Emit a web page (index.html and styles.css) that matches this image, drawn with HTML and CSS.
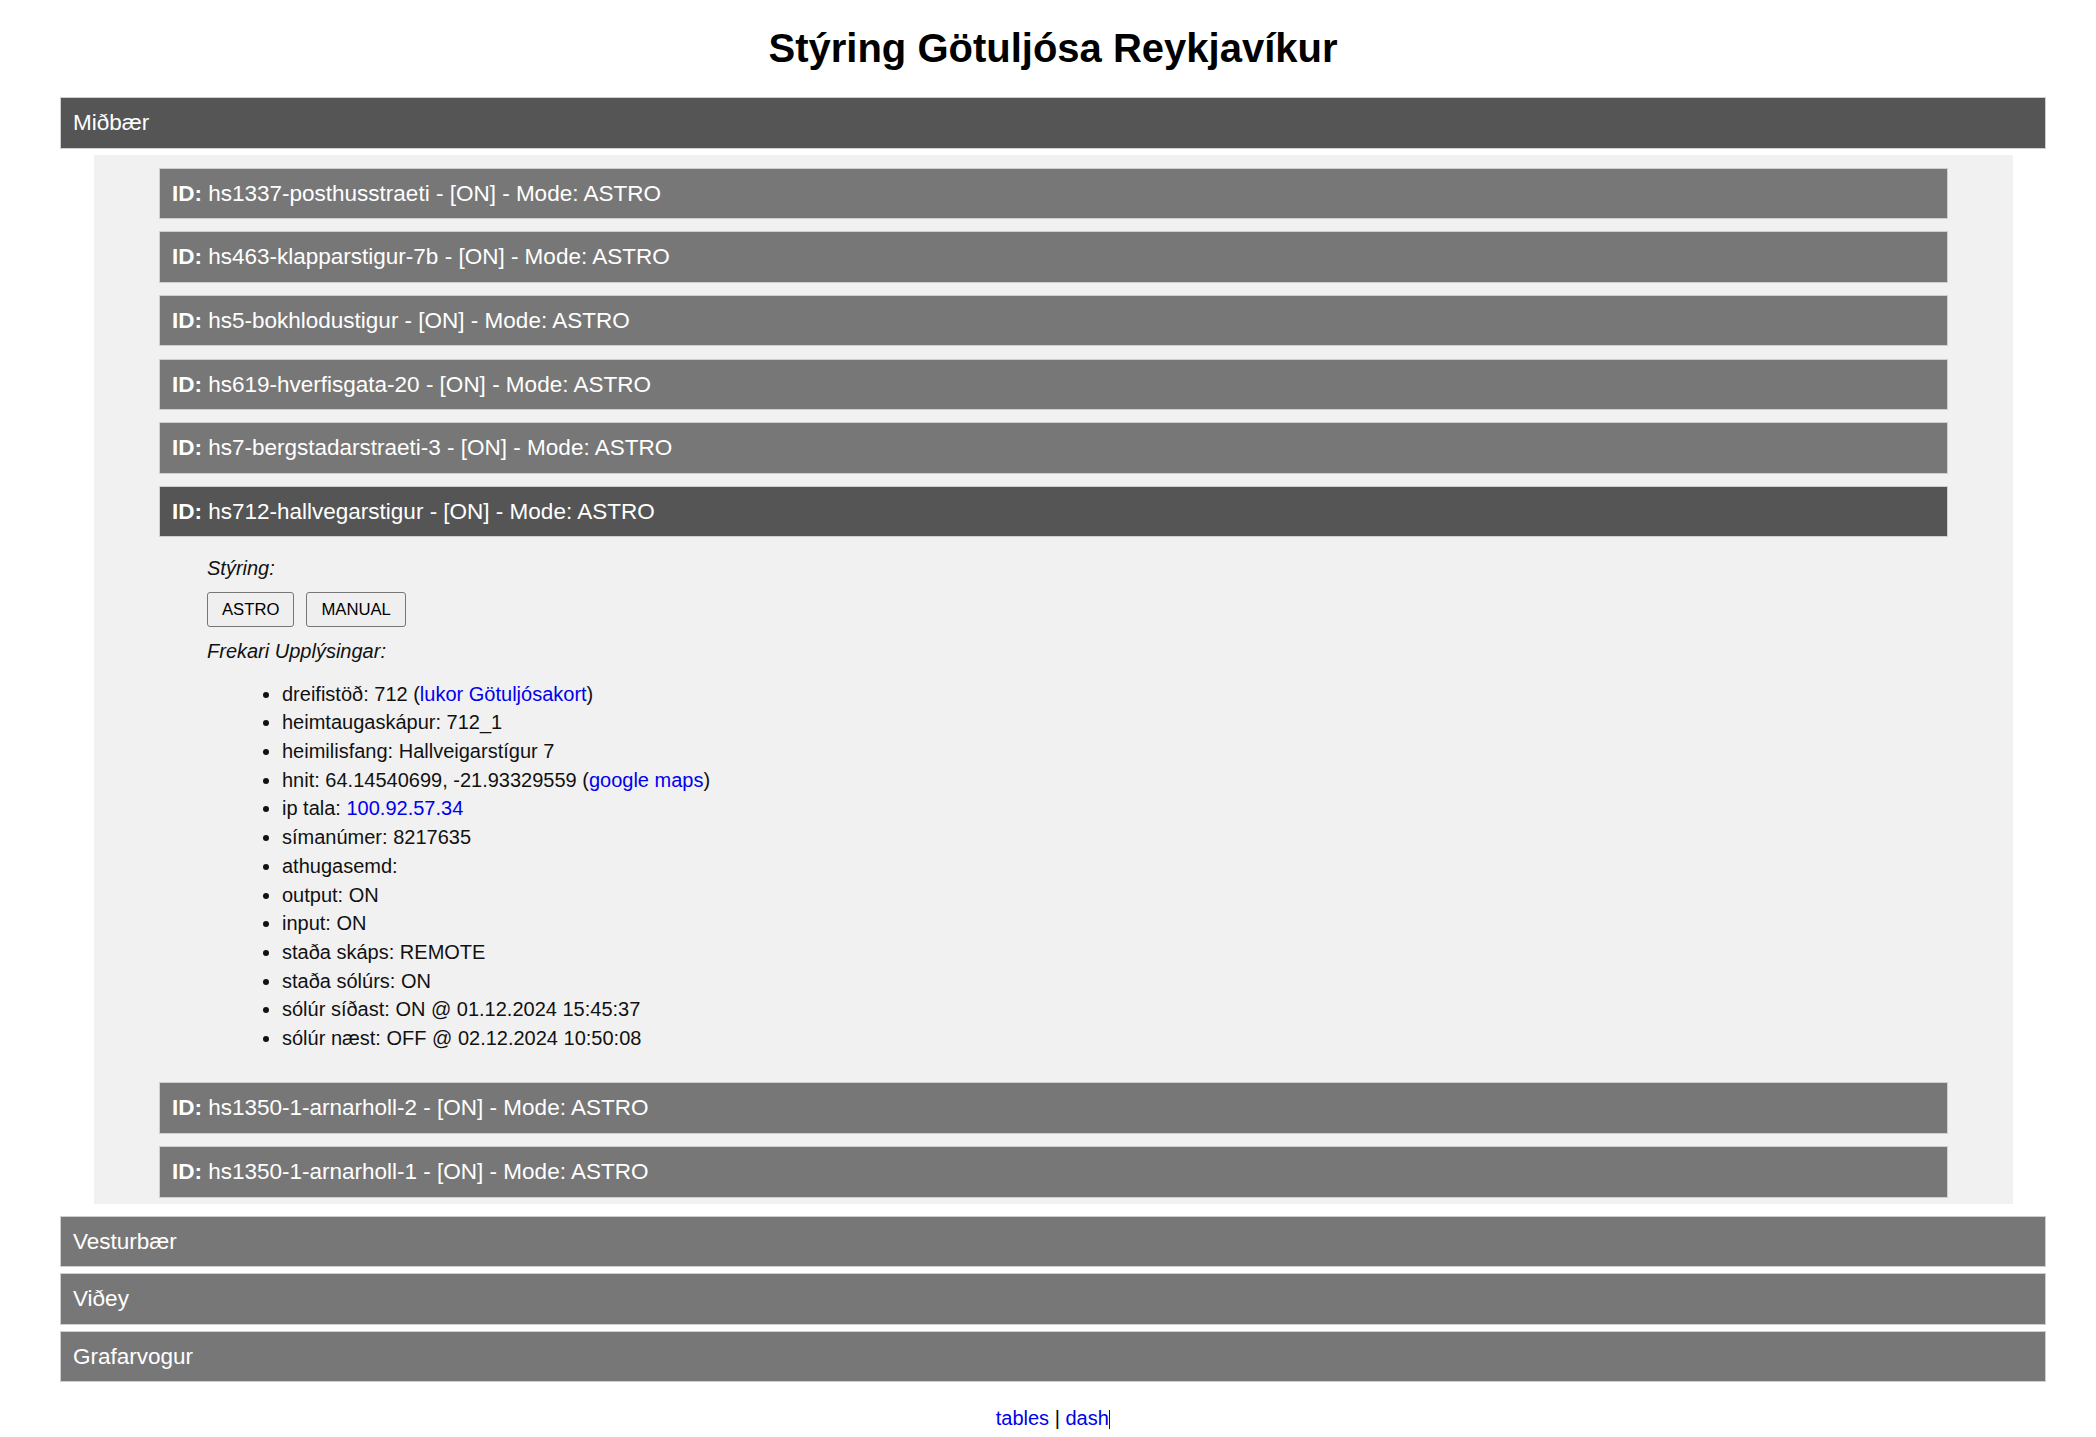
FILE: index.html
```html
<!DOCTYPE html>
<html lang="is">
<head>
<meta charset="utf-8">
<title>Stýring Götuljósa Reykjavíkur</title>
<link rel="stylesheet" href="styles.css">
</head>
<body>
<h1 class="title">Stýring Götuljósa Reykjavíkur</h1>
<div class="areas">
  <button class="bar area active">Miðbær</button>
  <div class="area-panel">
    <button class="bar light"><b>ID:</b> hs1337-posthusstraeti - [ON] - Mode: ASTRO</button>
    <button class="bar light"><b>ID:</b> hs463-klapparstigur-7b - [ON] - Mode: ASTRO</button>
    <button class="bar light"><b>ID:</b> hs5-bokhlodustigur - [ON] - Mode: ASTRO</button>
    <button class="bar light"><b>ID:</b> hs619-hverfisgata-20 - [ON] - Mode: ASTRO</button>
    <button class="bar light"><b>ID:</b> hs7-bergstadarstraeti-3 - [ON] - Mode: ASTRO</button>
    <button class="bar light active"><b>ID:</b> hs712-hallvegarstigur - [ON] - Mode: ASTRO</button>
    <div class="details">
      <p class="label label-first">Stýring:</p>
      <div class="modes">
        <button class="mode">ASTRO</button>
        <button class="mode">MANUAL</button>
      </div>
      <p class="label label-second">Frekari Upplýsingar:</p>
      <ul class="info">
        <li>dreifistöð: 712 (<a href="#">lukor Götuljósakort</a>)</li>
        <li>heimtaugaskápur: 712_1</li>
        <li>heimilisfang: Hallveigarstígur 7</li>
        <li>hnit: 64.14540699, -21.93329559 (<a href="#">google maps</a>)</li>
        <li>ip tala: <a href="#">100.92.57.34</a></li>
        <li>símanúmer: 8217635</li>
        <li>athugasemd:</li>
        <li>output: ON</li>
        <li>input: ON</li>
        <li>staða skáps: REMOTE</li>
        <li>staða sólúrs: ON</li>
        <li>sólúr síðast: ON @ 01.12.2024 15:45:37</li>
        <li>sólúr næst: OFF @ 02.12.2024 10:50:08</li>
      </ul>
    </div>
    <button class="bar light"><b>ID:</b> hs1350-1-arnarholl-2 - [ON] - Mode: ASTRO</button>
    <button class="bar light"><b>ID:</b> hs1350-1-arnarholl-1 - [ON] - Mode: ASTRO</button>
  </div>
  <button class="bar area">Vesturbær</button>
  <button class="bar area">Viðey</button>
  <button class="bar area">Grafarvogur</button>
</div>
<p class="footer"><a href="#">tables</a> | <a href="#">dash</a><span class="caret"></span></p>
</body>
</html>
```

FILE: styles.css
```css
* {
  box-sizing: border-box;
}

body {
  margin: 0;
  padding: 0 50px 0 60px;
  background: #ffffff;
  color: #000000;
  font-family: "Liberation Sans", Arial, sans-serif;
}

.title {
  margin: 24.5px 0 26.5px;
  font-size: 40px;
  line-height: 46px;
  font-weight: bold;
  text-align: center;
}

.areas {
  display: flex;
  flex-direction: column;
}

.bar {
  display: block;
  width: 100%;
  margin: 0;
  padding: 12px;
  border: 1px solid #cfcfcf;
  border-radius: 0;
  background: #777777;
  color: #ffffff;
  font-family: "Liberation Sans", Arial, sans-serif;
  font-size: 22.5px;
  line-height: 25.5px;
  text-align: left;
  cursor: pointer;
}

.bar.active {
  background: #555555;
}

.bar b {
  font-weight: bold;
}

.area {
  margin-bottom: 6px;
}

.area:last-child {
  margin-bottom: 0;
}

.area-panel {
  margin: 0 33px 12px 34px;
  padding: 13px 65px 6px;
  background: #f1f1f1;
}

.area-panel > * {
  margin-bottom: 12.2px;
}

.area-panel > *:last-child {
  margin-bottom: 0;
}

.details {
  padding: 7px 48px 17.5px;
}

.label {
  margin: 0;
  font-size: 20px;
  line-height: 23px;
  font-style: italic;
  color: #111111;
}

.modes {
  display: flex;
  gap: 12px;
  margin: 12px 0 13px;
}

.mode {
  margin: 0;
  padding: 7px 14px;
  border: 1px solid #767676;
  border-radius: 3px;
  background: #efefef;
  color: #000000;
  font-family: "Liberation Sans", Arial, sans-serif;
  font-size: 16.67px;
  line-height: 19px;
}

.info {
  margin: 17px 0 0;
  padding-left: 75px;
  font-size: 20px;
  line-height: 28.7px;
  color: #111111;
}

a {
  color: #0000ee;
  text-decoration: none;
}

.footer {
  margin: 24.5px 0 0;
  font-size: 20px;
  line-height: 23px;
  text-align: center;
}

.caret {
  display: inline-block;
  width: 1.5px;
  height: 19px;
  background: #0000ee;
  vertical-align: -4px;
}
```
